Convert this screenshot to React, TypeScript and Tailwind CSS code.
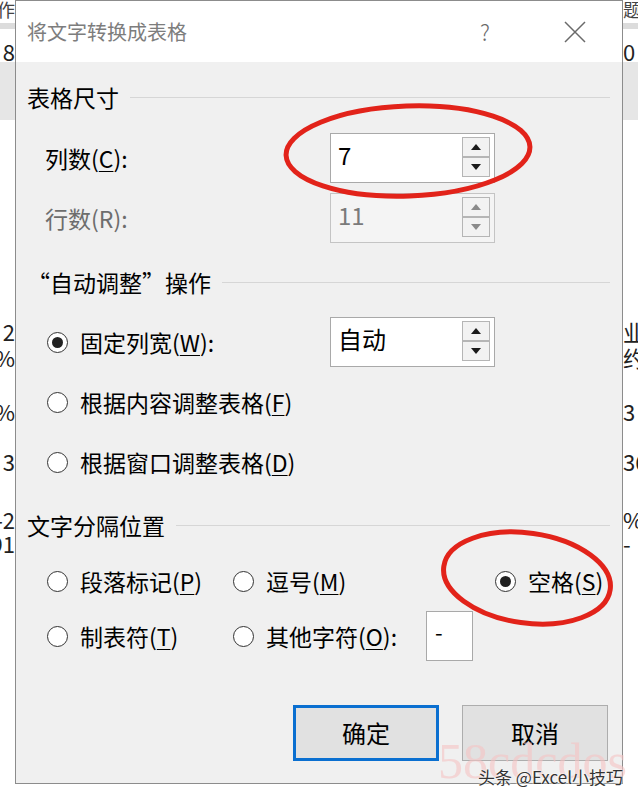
const font = { fontFamily: '"Noto Sans CJK SC", "Liberation Sans", sans-serif' };

function Radio({ checked }: { checked?: boolean }) {
  return (
    <span className="flex h-[21px] w-[21px] shrink-0 items-center justify-center rounded-full border-[1.5px] border-[#333] bg-white">
      {checked && <span className="h-[11px] w-[11px] rounded-full bg-[#222]" />}
    </span>
  );
}

function Arrow({ up, disabled }: { up?: boolean; disabled?: boolean }) {
  return (
    <span className="flex h-[20px] w-full items-center justify-center border border-[#b5b5b5] bg-[#f2f2f2]">
      <svg width="10" height="6" viewBox="0 0 10 6">
        <path d={up ? 'M0 6 L5 0 L10 6 Z' : 'M0 0 L5 6 L10 0 Z'} fill={disabled ? '#8a8a8a' : '#1a1a1a'} />
      </svg>
    </span>
  );
}

function SpinBox({ value, disabled }: { value: string; disabled?: boolean }) {
  return (
    <div className={`flex h-[50px] w-[165px] border ${disabled ? 'border-[#c4c4c4] bg-[#f4f4f4]' : 'border-[#a9a9a9] bg-white'}`}>
      <div className={`flex flex-1 items-center pb-[6px] pl-[7px] text-[24px] leading-none ${disabled ? 'text-[#7a7a7a]' : 'text-black'}`}>{value}</div>
      <div className="mr-[4px] mt-[3px] flex w-[28px] flex-col">
        <Arrow up disabled={disabled} />
        <Arrow disabled={disabled} />
      </div>
    </div>
  );
}

function Header({ children }: { children: React.ReactNode }) {
  return (
    <div className="flex h-[30px] items-center pl-[11px] pr-[12px]">
      <span className="text-[23px] leading-none text-black">{children}</span>
      <span className="ml-[11px] h-px flex-1 bg-[#d6d6d6]" />
    </div>
  );
}

function RadioLabel({ checked, children }: { checked?: boolean; children: React.ReactNode }) {
  return (
    <div className="flex items-center gap-[12px]">
      <Radio checked={checked} />
      <span className="text-[23px] leading-none text-black">{children}</span>
    </div>
  );
}

function Key({ k }: { k: string }) {
  return (
    <>
      (<span className="underline decoration-1 underline-offset-[3px]">{k}</span>)
    </>
  );
}

function Strip({ side }: { side: 'left' | 'right' }) {
  const left = side === 'left';
  const bits = left
    ? ['2', '%', '9%', '·3', '-2', '91']
    : ['业', '约', '3', '36', '%', '-'];
  const tops = [320, 346, 400, 450, 508, 532];
  return (
    <div className={`flex w-[15px] flex-col overflow-hidden text-[22px] leading-none text-[#222] ${left ? 'items-end' : 'items-start'}`}>
      <div className="h-[20px] text-[18px] text-[#444]">{left ? '作' : '题'}</div>
      <div className="mt-[3px] h-[6px] w-full bg-[#dcdcdc]" />
      <div className="h-[33px] pt-[11px] text-[22px]">{left ? '8' : '0'}</div>
      <div className="h-[58px] w-full bg-[#e6e6e6]" />
      {bits.map((b, i) => (
        <div
          key={i}
          className="whitespace-nowrap"
          style={{ marginTop: i === 0 ? tops[0] - 120 : tops[i] - tops[i - 1] - 22, height: 22 }}
        >
          {b}
        </div>
      ))}
    </div>
  );
}

export default function App() {
  return (
    <div className="relative h-[798px] w-[638px] overflow-hidden bg-white" style={font}>
      <div className="flex">
        <Strip side="left" />
        <div className="flex h-[784px] w-[608px] flex-col border-x border-b border-t border-[#8c8c8c]">
          <div className="flex h-[61px] items-center bg-white pl-[11px]">
            <span className="text-[20px] text-[#7d7d7d]">将文字转换成表格</span>
            <span className="ml-auto text-[22px] font-light text-[#6a6a6a]">?</span>
            <svg className="ml-[74px] mr-[36px]" width="22" height="22" viewBox="0 0 22 22">
              <path d="M1 1 L21 21 M21 1 L1 21" stroke="#6a6a6a" strokeWidth="1.5" />
            </svg>
          </div>
          <div className="flex flex-1 flex-col bg-[#f0f0f0] pt-[20px]">
            <Header>表格尺寸</Header>
            <div className="mt-[21px] flex items-center pl-[29px]">
              <span className="w-[285px] text-[23px] leading-none text-black">列数<Key k="C" />:</span>
              <SpinBox value="7" />
            </div>
            <div className="mt-[10px] flex items-center pl-[29px]">
              <span className="w-[285px] text-[23px] leading-none text-[#6d6d6d]">行数(R):</span>
              <SpinBox value="11" disabled />
            </div>
            <div className="mt-[24px]">
              <Header>“自动调整”操作</Header>
            </div>
            <div className="mt-[20px] flex items-center pl-[31px]">
              <div className="w-[283px]">
                <RadioLabel checked>固定列宽<Key k="W" />:</RadioLabel>
              </div>
              <SpinBox value="自动" />
            </div>
            <div className="mt-[10px] flex h-[50px] items-center pl-[31px]">
              <RadioLabel>根据内容调整表格<Key k="F" /></RadioLabel>
            </div>
            <div className="mt-[10px] flex h-[50px] items-center pl-[31px]">
              <RadioLabel>根据窗口调整表格<Key k="D" /></RadioLabel>
            </div>
            <div className="mt-[23px]">
              <Header>文字分隔位置</Header>
            </div>
            <div className="mt-[16px] flex h-[50px] items-center pl-[31px]">
              <div className="w-[186px]">
                <RadioLabel>段落标记<Key k="P" /></RadioLabel>
              </div>
              <div className="w-[262px]">
                <RadioLabel>逗号<Key k="M" /></RadioLabel>
              </div>
              <RadioLabel checked>空格<Key k="S" /></RadioLabel>
            </div>
            <div className="mt-[5px] flex h-[50px] items-center pl-[31px]">
              <div className="w-[186px]">
                <RadioLabel>制表符<Key k="T" /></RadioLabel>
              </div>
              <RadioLabel>其他字符<Key k="O" />:</RadioLabel>
              <div className="ml-[29px] h-[50px] w-[47px] border border-[#a9a9a9] bg-white pl-[8px] pt-[8px] text-[22px] leading-none">-</div>
            </div>
            <div className="mt-[44px] flex justify-end gap-[23px] pr-[14px]">
              <button className="h-[56px] w-[146px] border-[3px] border-[#0a6fd0] bg-[#e1e1e1] text-[24px] text-black">确定</button>
              <button className="h-[56px] w-[146px] border border-[#adadad] bg-[#e1e1e1] text-[24px] text-black">取消</button>
            </div>
          </div>
        </div>
        <Strip side="right" />
      </div>

      <svg className="pointer-events-none absolute left-0 top-0" width="638" height="798">
        <ellipse cx="408" cy="151" rx="122" ry="45" fill="none" stroke="#e2231a" strokeWidth="5" transform="rotate(-2 408 151)" />
        <ellipse cx="527" cy="578" rx="84" ry="45" fill="none" stroke="#e2231a" strokeWidth="5" transform="rotate(8 527 578)" />
      </svg>
      <div
        className="pointer-events-none absolute left-[438px] top-[736px] whitespace-nowrap text-[50px] leading-none text-[#f5c4c4] opacity-60"
        style={{ fontFamily: '"Liberation Serif", serif' }}
      >
        58cdcdos
      </div>
      <div
        className="pointer-events-none absolute left-[478px] top-[768px] whitespace-nowrap text-[17px] leading-none text-[#333]"
        style={{ textShadow: '0 0 2px #fff, 0 0 2px #fff' }}
      >
        头条 @Excel小技巧
      </div>
    </div>
  );
}
